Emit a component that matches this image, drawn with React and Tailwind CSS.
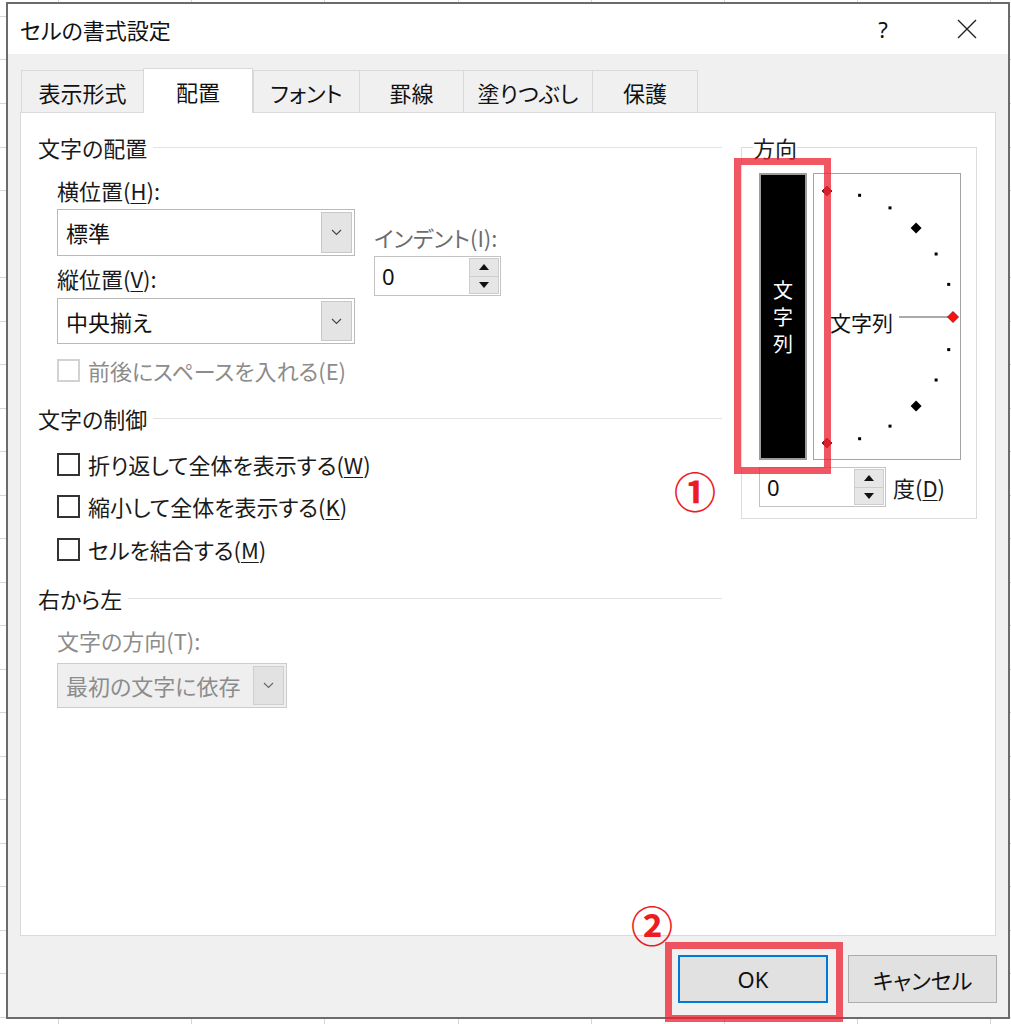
import React from 'react';

const FONT = "font-['Noto_Sans_CJK_JP','Noto_Sans',sans-serif] [font-feature-settings:'palt']";

const tabs = [
    { label: '表示形式', cls: 'w-[122px]' },
    { label: '配置', cls: 'w-[110px]', active: true },
    { label: 'フォント', cls: 'w-[106px]' },
    { label: '罫線', cls: 'w-[104px]' },
    { label: '塗りつぶし', cls: 'w-[129px]' },
    { label: '保護', cls: 'w-[106px] border-r' },
];

const U = ({ children }) => <span className="underline decoration-1 underline-offset-[3px]">{children}</span>;

const GroupHeader = ({ title }) => (
    <div className="flex h-[26px] items-center">
        <span className="text-[22px] leading-[26px] text-[#1a1a1a]">{title}</span>
        <div className="ml-[6px] h-px flex-1 bg-[#e3e3e3]" />
    </div>
);

const Chevron = ({ color = '#444' }) => (
    <svg width="11" height="7" viewBox="0 0 11 7">
        <polyline points="1,1 5.5,5.5 10,1" fill="none" stroke={color} strokeWidth="1.1" />
    </svg>
);

const Select = ({ value, className, disabled }) => (
    <div className={`flex items-stretch border p-[2px] ${disabled ? 'border-[#cccccc] bg-[#efefef]' : 'border-[#b9b9b9] bg-white'} ${className}`}>
        <div className={`flex flex-1 items-center pl-[6px] text-[22px] ${disabled ? 'text-[#8c8c8c]' : 'text-[#111]'}`}>{value}</div>
        <div className={`flex w-[31px] items-center justify-center border ${disabled ? 'border-[#cfcfcf] bg-[#e2e2e2]' : 'border-[#c8c8c8] bg-[#e4e4e4]'}`}>
            <Chevron color={disabled ? '#666' : '#444'} />
        </div>
    </div>
);

const Arrow = ({ up }) => (
    <svg width="10" height="6" viewBox="0 0 10 6">
        <polygon points={up ? '5,0 10,6 0,6' : '0,0 10,0 5,6'} fill="#111" />
    </svg>
);

const Spin = ({ className }) => (
    <div className={`flex h-[40px] items-stretch border border-[#c3c3c3] bg-white py-[1px] pr-[1px] ${className}`}>
        <div className="flex flex-1 items-center pl-[7px] font-['Noto_Sans',sans-serif] text-[22px] text-[#111]">0</div>
        <div className="flex w-[30px] flex-col">
            <div className="flex flex-1 items-center justify-center border border-[#cdcdcd] bg-[#e6e6e6]"><Arrow up /></div>
            <div className="flex flex-1 items-center justify-center border border-t-0 border-[#cdcdcd] bg-[#e6e6e6]"><Arrow /></div>
        </div>
    </div>
);

const CheckRow = ({ children, className, disabled }) => (
    <div className={`flex h-[26px] items-center pl-[19px] ${className}`}>
        <div className={`h-[23px] w-[23px] bg-white ${disabled ? 'border-2 border-[#d2d2d2]' : 'border-2 border-[#333]'}`} />
        <span className={`ml-[8px] text-[22px] leading-[26px] ${disabled ? 'text-[#8c8c8c]' : 'text-[#1a1a1a]'}`}>{children}</span>
    </div>
);

const Dial = () => {
    const angles = [90, 75, 60, 45, 30, 15, 0, -15, -30, -45, -60, -75, -90];
    const cx = 13, cy = 143, r = 126;
    return (
        <div className="relative h-[287px] w-[148px] border border-[#a3a3a3] bg-white">
            <svg className="absolute left-0 top-0" width="146" height="285" viewBox="0 0 146 285">
                <line x1="85" y1="143" x2="134" y2="143" stroke="#555" strokeWidth="1" />
                {angles.map((a) => {
                    const x = cx + r * Math.cos((a * Math.PI) / 180);
                    const y = cy - r * Math.sin((a * Math.PI) / 180);
                    if (a === 90 || a === -90) {
                        return <polygon key={a} points={`${x},${y - 5} ${x + 5},${y} ${x},${y + 5} ${x - 5},${y}`} fill="#a01414" stroke="#5a0a0a" strokeWidth="0.8" />;
                    }
                    if (a === 0) {
                        return <polygon key={a} points={`${x},${y - 5.5} ${x + 5.5},${y} ${x},${y + 5.5} ${x - 5.5},${y}`} fill="#ff1010" stroke="#8a0000" strokeWidth="0.8" />;
                    }
                    if (a === 45 || a === -45) {
                        return <polygon key={a} points={`${x},${y - 5.5} ${x + 5.5},${y} ${x},${y + 5.5} ${x - 5.5},${y}`} fill="#000" />;
                    }
                    return <rect key={a} x={x - 1.5} y={y - 1.5} width="3" height="3" fill="#000" />;
                })}
            </svg>
            <span className="absolute left-[16px] top-[135px] text-[21px] leading-[26px] text-[#111]">文字列</span>
        </div>
    );
};

export default function App() {
    return (
        <div className={`relative h-[1024px] w-[1011px] overflow-hidden bg-white pt-[2px] ${FONT} [background-image:repeating-linear-gradient(180deg,transparent_0px,transparent_16px,#d6d6d6_16px,#d6d6d6_17px,transparent_17px,transparent_43.5px),repeating-linear-gradient(90deg,transparent_0px,transparent_58px,#d6d6d6_58px,#d6d6d6_59px,transparent_59px,transparent_133.2px)]`}>
            {/* dialog */}
            <div className="ml-[6px] flex h-[1017px] w-[1004px] flex-col border-2 border-[#6b6b6b] bg-[#f0f0f0]">
                {/* title bar */}
                <div className="flex h-[50px] items-center bg-white pl-[12px] text-[#111]">
                    <span className="text-[22px]">セルの書式設定</span>
                    <span className="ml-auto w-[24px] text-center font-['Noto_Sans',sans-serif] text-[22px]">?</span>
                    <div className="ml-[62px] mr-[31px] flex">
                        <svg width="20" height="20" viewBox="0 0 20 20">
                            <path d="M1 1 L19 19 M19 1 L1 19" stroke="#222" strokeWidth="1.4" />
                        </svg>
                    </div>
                </div>

                {/* tabs */}
                <div className="flex h-[58px] items-end pl-[13px]">
                    {tabs.map((t) => (
                        <div
                            key={t.label}
                            className={`flex items-center justify-center border-l border-t border-[#d9d9d9] text-[22px] text-[#111] ${t.cls} ${t.active ? 'relative z-10 -mb-px h-[45px] border-r bg-white' : 'h-[42px] bg-[#f0f0f0] pt-[2px]'}`}
                        >
                            {t.label}
                        </div>
                    ))}
                </div>

                {/* panel */}
                <div className="mx-[12px] flex h-[824px] gap-[19px] border border-[#dadada] bg-white pl-[17px] pr-[18px]">
                    {/* left column */}
                    <div className="w-[684px] pt-[21px]">
                        <GroupHeader title="文字の配置" />
                        <div className="mt-[17px] flex pl-[19px]">
                            <div className="flex w-[298px] flex-col">
                                <span className="text-[22px] leading-[26px] text-[#1a1a1a]">横位置(<U>H</U>):</span>
                                <Select value="標準" className="mt-[6px] h-[47px] w-[298px]" />
                                <span className="mt-[9px] text-[22px] leading-[26px] text-[#1a1a1a]">縦位置(<U>V</U>):</span>
                                <Select value="中央揃え" className="mt-[7px] h-[46px] w-[298px]" />
                            </div>
                            <div className="ml-[19px] flex flex-col pt-[47px]">
                                <span className="text-[22px] leading-[26px] text-[#6d6d6d]">インデント(I):</span>
                                <Spin className="mt-[6px] w-[127px]" />
                            </div>
                        </div>
                        <CheckRow className="mt-[13px]" disabled>前後にスペースを入れる(E)</CheckRow>

                        <div className="mt-[22px]"><GroupHeader title="文字の制御" /></div>
                        <CheckRow className="mt-[20px]">折り返して全体を表示する(<U>W</U>)</CheckRow>
                        <CheckRow className="mt-[16px]">縮小して全体を表示する(<U>K</U>)</CheckRow>
                        <CheckRow className="mt-[17px]">セルを結合する(<U>M</U>)</CheckRow>

                        <div className="mt-[23px]"><GroupHeader title="右から左" /></div>
                        <div className="mt-[16px] pl-[19px]">
                            <span className="text-[22px] leading-[26px] text-[#8c8c8c]">文字の方向(T):</span>
                            <Select value="最初の文字に依存" className="mt-[8px] h-[45px] w-[230px]" disabled />
                        </div>
                    </div>

                    {/* right column */}
                    <div className="w-[236px] pt-[21px]">
                        <fieldset className="border border-[#dcdcdc] pb-[11px]">
                            <legend className="ml-[11px] text-[22px] leading-[26px] text-[#1a1a1a]">方向</legend>
                            <div className="mt-[13px] flex gap-[6px] pl-[17px]">
                                <div className="flex h-[287px] w-[48px] flex-col items-center justify-center border-2 border-[#9c9c9c] bg-black text-[20px] leading-[27px] text-white">
                                    <span>文</span>
                                    <span>字</span>
                                    <span>列</span>
                                </div>
                                <Dial />
                            </div>
                            <div className="mt-[7px] flex items-center pl-[17px]">
                                <Spin className="w-[127px]" />
                                <span className="ml-[7px] text-[22px] leading-[26px] text-[#1a1a1a]">度(<U>D</U>)</span>
                            </div>
                        </fieldset>
                    </div>
                </div>

                {/* footer */}
                <div className="flex flex-1 items-start justify-end gap-[20px] pr-[11px] pt-[19px]">
                    <button className="h-[48px] w-[150px] border-2 border-[#0078d7] bg-[#e1e1e1] font-['Noto_Sans',sans-serif] text-[22px] text-[#111]">OK</button>
                    <button className="h-[48px] w-[149px] border border-[#adadad] bg-[#e1e1e1] text-[22px] text-[#111]">キャンセル</button>
                </div>
            </div>

            {/* annotations */}
            <div className="absolute left-[734px] top-[158px] h-[316px] w-[97px] border-[7px] border-[rgba(236,34,50,0.76)]" />
            <span className="absolute left-[674px] top-[466px] text-[42px] font-bold leading-[48px] text-[#ec1c24]">①</span>
            <div className="absolute left-[665px] top-[942px] h-[80px] w-[178px] border-[7px] border-[rgba(236,34,50,0.76)]" />
            <span className="absolute left-[631px] top-[900px] text-[42px] font-bold leading-[48px] text-[#ec1c24]">②</span>
        </div>
    );
}
